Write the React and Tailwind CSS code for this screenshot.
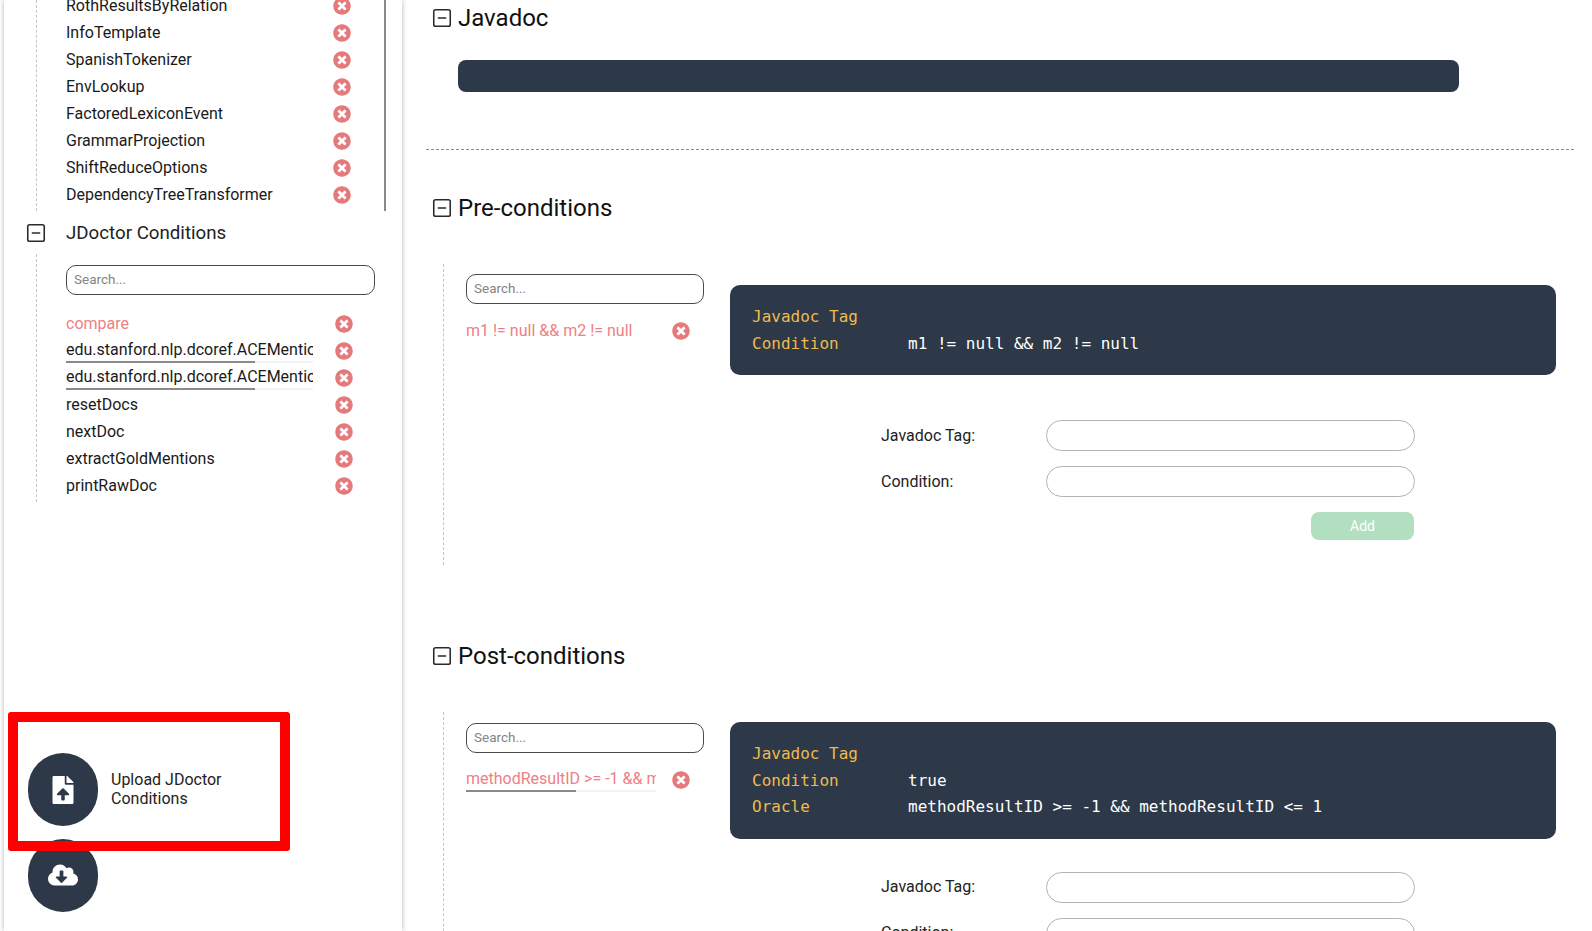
import React from 'react';
import { SquareMinus } from 'lucide-react';
import { FaTimesCircle, FaFileUpload, FaCloudDownloadAlt } from 'react-icons/fa';

const classes = ['InfoTemplate', 'SpanishTokenizer', 'EnvLookup', 'FactoredLexiconEvent', 'GrammarProjection', 'ShiftReduceOptions', 'DependencyTreeTransformer'];
const conditions = [
  { name: 'compare', active: true },
  { name: 'edu.stanford.nlp.dcoref.ACEMentionExtractor.ACEMentionExtractor', scroll: true },
  { name: 'edu.stanford.nlp.dcoref.ACEMentionExtractor.ACEMentionExtractor', scroll: true },
  { name: 'resetDocs' },
  { name: 'nextDoc' },
  { name: 'extractGoldMentions' },
  { name: 'printRawDoc' },
];

const RemoveIcon = () => <FaTimesCircle className="text-[#e57a7d] shrink-0" size={18} />;

const ScrollTrack = ({ thumb }) => (
  <div className="h-[2px] w-full bg-[#f2f2f2]">
    <div className={`h-full bg-[#8a8a8a] ${thumb}`}></div>
  </div>
);

const SidebarRow = ({ item }) => (
  <div className="flex h-[27px] items-center">
    <div className="w-[247px] min-w-0">
      <div className={`overflow-hidden whitespace-nowrap text-[16px] leading-[22px] ${item.active ? 'text-[#ee7f84]' : 'text-[#1a1a1a]'}`}>{item.name}</div>
      {item.scroll && <ScrollTrack thumb="w-[189px]" />}
    </div>
    <div className="ml-[22px]"><RemoveIcon /></div>
  </div>
);

const Search = ({ className }) => (
  <input
    placeholder="Search..."
    className={`h-[30px] rounded-[10px] border border-[#4a4a4a] bg-white px-[7px] pb-[2px] text-[13.5px] text-black outline-none placeholder:text-[#858585] ${className}`}
  />
);

const Heading = ({ title, className }) => (
  <div className={`flex items-center ${className}`}>
    <SquareMinus className="ml-[5px] text-[#2b2b2b]" size={22} strokeWidth={1.7} />
    <h2 className="ml-[5px] text-[24px] leading-[30px] text-[#111]">{title}</h2>
  </div>
);

const CodeBox = ({ rows, className }) => (
  <div className={`mr-[18px] rounded-[10px] bg-[#2d3848] px-[22px] font-['DejaVu_Sans_Mono',monospace] text-[16px] leading-[26.5px] ${className}`}>
    {rows.map(([key, value]) => (
      <div key={key} className="flex">
        <span className="w-[156px] text-[#eebb4d]">{key}</span>
        <span className="whitespace-pre text-white">{value}</span>
      </div>
    ))}
  </div>
);

const FormRow = ({ label, className }) => (
  <div className={`flex items-center ${className}`}>
    <label className="w-[165px] text-[16px] text-[#222]">{label}</label>
    <input className="h-[31px] w-[369px] rounded-full border border-[#b3b3b3] bg-white outline-none" />
  </div>
);

const Fab = ({ children, className }) => (
  <div className={`flex h-[73px] w-[70px] items-center justify-center rounded-full bg-[#2d3848] text-white ${className}`}>{children}</div>
);

export default function App() {
  return (
    <div className="flex h-[931px] w-[1592px] overflow-hidden bg-white font-['Roboto',sans-serif]">
      {/* Sidebar */}
      <aside className="relative ml-[4px] flex h-full w-[398px] shrink-0 flex-col shadow-[0_0_5px_rgba(0,0,0,0.3)]">
        <div className="relative h-[211px] shrink-0 overflow-hidden pl-[62px]">
          <div className="absolute bottom-0 left-[32px] top-0 border-l border-dashed border-[#c4c4c4]"></div>
          <div className="absolute right-[16px] top-0 h-full w-[2px] bg-[#8a8a8a]"></div>
          <div className="-mt-[8px] flex h-[27px] w-[292px] items-center justify-between pr-[7px] text-[16px] text-[#1a1a1a]">
            <span>RothResultsByRelation</span>
            <RemoveIcon />
          </div>
          {classes.map(name => (
            <div key={name} className="flex h-[27px] w-[292px] items-center justify-between pr-[7px] text-[16px] text-[#1a1a1a]">
              <span>{name}</span>
              <RemoveIcon />
            </div>
          ))}
        </div>

        <div className="mt-[6px] flex h-[32px] items-center">
          <SquareMinus className="ml-[21px] text-[#2b2b2b]" size={22} strokeWidth={1.7} />
          <span className="ml-[19px] text-[18.72px] text-[#222]">JDoctor Conditions</span>
        </div>

        <div className="ml-[32px] mt-[5px] h-[248px] border-l border-dashed border-[#c4c4c4] pl-[29px]">
          <Search className="mt-[11px] block w-[309px]" />
          <div className="mt-[15px]">
            {conditions.map((c, i) => <SidebarRow key={i} item={c} />)}
          </div>
        </div>

        <div className="mt-auto pl-[24px]">
          <div className="flex items-center">
            <Fab><FaFileUpload size={28} /></Fab>
            <span className="-mt-[2px] ml-[13px] text-[16px] leading-[19px] text-[#222]">Upload JDoctor<br />Conditions</span>
          </div>
          <Fab className="mb-[19px] mt-[13px]"><FaCloudDownloadAlt className="-mt-[2px]" size={30} /></Fab>
        </div>

        {/* red annotation on top of the screenshot */}
        <div className="absolute left-[4px] top-[712px] h-[139px] w-[282px] rounded-[3px] border-[10px] border-[#ff0000]"></div>
      </aside>

      {/* Main content */}
      <main className="flex-1 pl-[24px] pr-[18px]">
        <Heading title="Javadoc" className="mt-[3px]" />
        <div className="ml-[32px] mr-[115px] mt-[27px] h-[32px] rounded-[8px] bg-[#2d3848]"></div>
        <div className="mt-[57px] border-t border-dashed border-[#8a8a8a]"></div>

        <Heading title="Pre-conditions" className="mt-[43px]" />
        <div className="ml-[17px] mt-[41px] flex h-[301px] items-start border-l border-dashed border-[#c4c4c4] pl-[22px]">
          <div className="w-[238px] shrink-0 pt-[10px]">
            <Search className="block w-[238px]" />
            <div className="mt-[13px] flex h-[27px] items-center text-[16px] text-[#ee7f84]">
              <span className="w-[206px]">m1 != null &amp;&amp; m2 != null</span>
              <RemoveIcon />
            </div>
          </div>
          <div className="ml-[26px] flex-1">
            <CodeBox rows={[['Javadoc Tag', ''], ['Condition', 'm1 != null && m2 != null']]} className="mt-[21px] pb-[18px] pt-[19px]" />
            <FormRow label="Javadoc Tag:" className="ml-[151px] mt-[45px]" />
            <FormRow label="Condition:" className="ml-[151px] mt-[15px]" />
            <button className="ml-[581px] mt-[15px] block h-[28px] w-[103px] rounded-[8px] bg-[#b3dfc1] text-[14px] text-white">Add</button>
          </div>
        </div>

        <Heading title="Post-conditions" className="mt-[76px]" />
        <div className="ml-[17px] mt-[41px] flex h-[300px] items-start border-l border-dashed border-[#c4c4c4] pl-[22px]">
          <div className="w-[238px] shrink-0 pt-[11px]">
            <Search className="block w-[238px]" />
            <div className="mt-[13px] flex h-[27px] items-center text-[16px] text-[#ee7f84]">
              <div className="w-[190px] min-w-0">
                <div className="overflow-hidden whitespace-nowrap leading-[22px]">methodResultID &gt;= -1 &amp;&amp; methodResultID &lt;= 1</div>
                <ScrollTrack thumb="w-[110px]" />
              </div>
              <div className="ml-[16px]"><RemoveIcon /></div>
            </div>
          </div>
          <div className="ml-[26px] flex-1">
            <CodeBox
              rows={[['Javadoc Tag', ''], ['Condition', 'true'], ['Oracle', 'methodResultID >= -1 && methodResultID <= 1']]}
              className="mt-[10px] pb-[18px] pt-[19px]"
            />
            <FormRow label="Javadoc Tag:" className="ml-[151px] mt-[33px]" />
            <FormRow label="Condition:" className="ml-[151px] mt-[15px]" />
          </div>
        </div>
      </main>
    </div>
  );
}
